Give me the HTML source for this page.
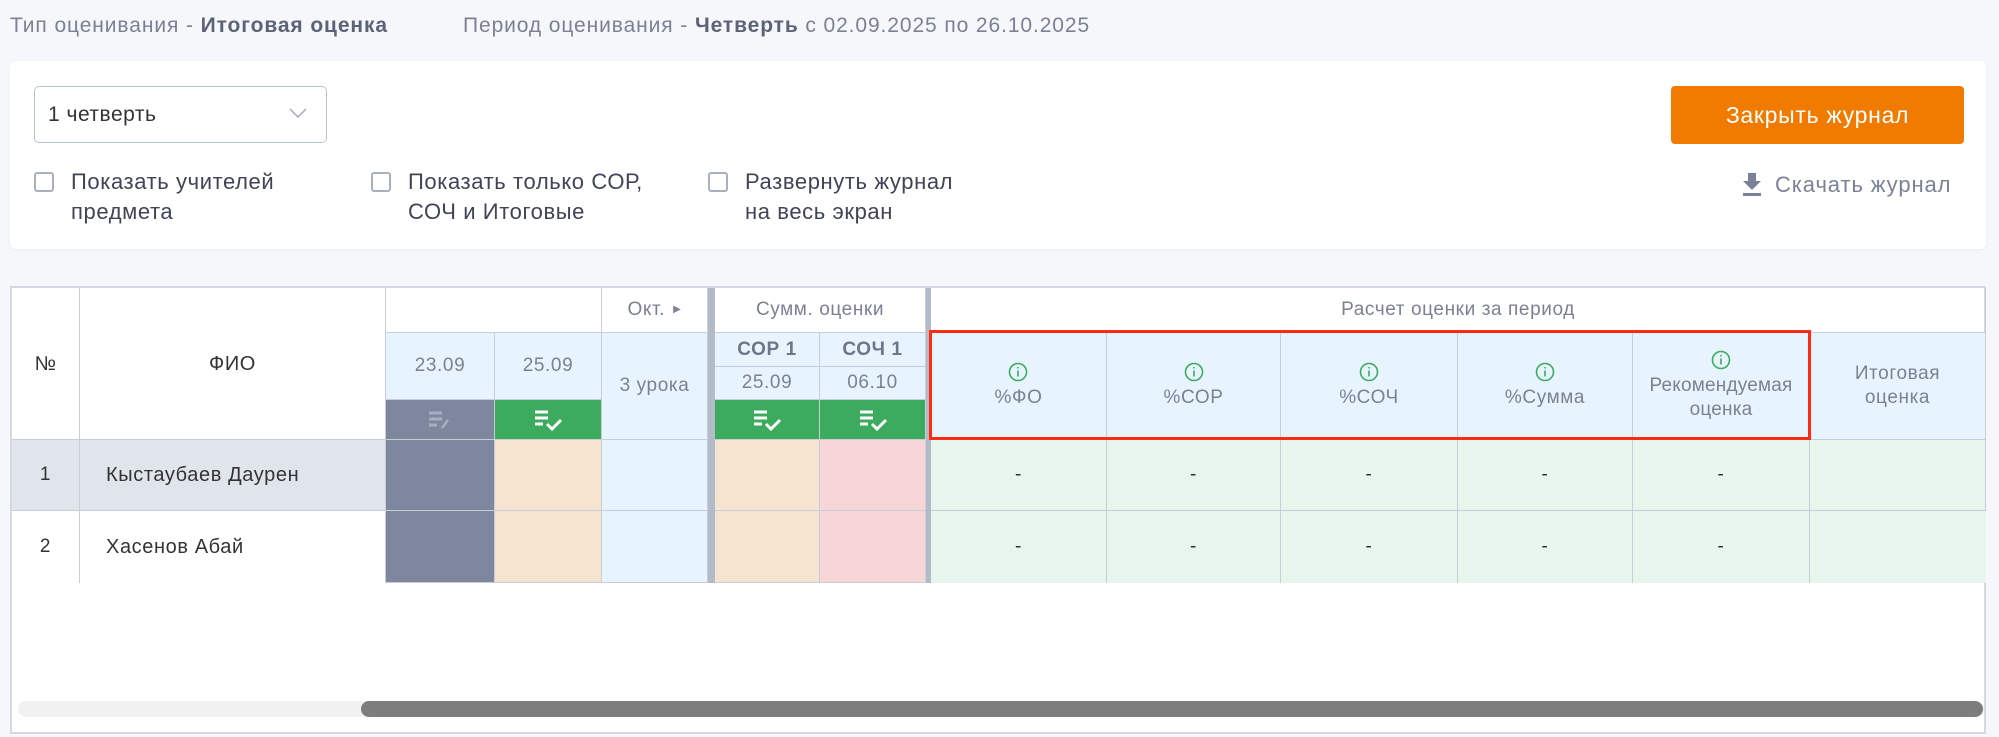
<!DOCTYPE html>
<html><head><meta charset="utf-8"><style>
*{box-sizing:border-box;margin:0;padding:0}
body{width:1999px;height:737px;background:#f5f7fa;font-family:"Liberation Sans",sans-serif;color:#3a3f4f;position:relative;overflow:hidden}
.a{position:absolute}
.t{color:#7a8194;font-size:21px;letter-spacing:0.9px}
.t b{color:#5d6377}
.c{position:absolute;display:flex;align-items:center;justify-content:center;text-align:center;color:#7a8194;font-size:19px;letter-spacing:0.6px;line-height:24px;border-right:1px solid #c8cdd8;border-bottom:1px solid #c8cdd8}
.cb{position:absolute;width:20px;height:20px;border:2px solid #a9b0bf;border-radius:3px;background:#fff}
.lbl{position:absolute;font-size:22px;letter-spacing:0.6px;line-height:30px;color:#3f4456}
.ic{display:block;margin:0 auto 4px}
</style></head><body>
<div class="a t" style="left:10px;top:14px">Тип оценивания - <b>Итоговая оценка</b></div>
<div class="a t" style="left:463px;top:14px">Период оценивания - <b>Четверть</b> с 02.09.2025 по 26.10.2025</div>

<div class="a" style="left:10px;top:61px;width:1976px;height:188px;background:#fff;border-radius:6px;box-shadow:0 1px 3px rgba(0,0,0,.05)"></div>
<div class="a" style="left:34px;top:86px;width:293px;height:57px;border:1px solid #b8c2d2;border-radius:5px;background:#fff"></div>
<div class="a" style="left:48px;top:103px;font-size:21px;letter-spacing:0.5px;color:#333">1 четверть</div>
<svg class="a" style="left:288px;top:106px" width="20" height="14"><path d="M2 3l8 8 8-8" fill="none" stroke="#a9b3c6" stroke-width="1.6"/></svg>

<div class="cb" style="left:34px;top:172px"></div>
<div class="lbl" style="left:71px;top:167px">Показать учителей<br>предмета</div>
<div class="cb" style="left:371px;top:172px"></div>
<div class="lbl" style="left:408px;top:167px">Показать только СОР,<br>СОЧ и Итоговые</div>
<div class="cb" style="left:708px;top:172px"></div>
<div class="lbl" style="left:745px;top:167px">Развернуть журнал<br>на весь экран</div>

<div class="a" style="left:1671px;top:86px;width:293px;height:58px;background:#f07b00;border-radius:4px;color:#fff;font-size:23px;letter-spacing:0.7px;display:flex;align-items:center;justify-content:center">Закрыть журнал</div>
<svg class="a" style="left:1741px;top:171px" width="22" height="26"><path d="M7 2h8v8h5l-9 9-9-9h5z" fill="#7a8198"/><rect x="2" y="22" width="18" height="3" fill="#7a8198"/></svg>
<div class="a" style="left:1775px;top:172px;font-size:22px;letter-spacing:0.9px;color:#7a8198">Скачать журнал</div>

<!-- table -->
<div class="a" style="left:10px;top:286px;width:1976px;height:448px;background:#fff;border:2px solid #d3d8e1"></div>
<div class="c" style="left:12px;top:288px;width:68px;height:152px;color:#333;font-size:20px">№</div>
<div class="c" style="left:80px;top:288px;width:306px;height:152px;color:#333;font-size:20px">ФИО</div>
<div class="c" style="left:386px;top:288px;width:216px;height:45px"></div>
<div class="c" style="left:602px;top:288px;width:106px;height:45px">Окт. <span style="font-size:10px;margin-left:8px">▶</span></div>
<div class="a" style="left:708px;top:288px;width:7px;height:295px;background:#b3bac8"></div>
<div class="c" style="left:715px;top:288px;width:211px;height:45px">Сумм. оценки</div>
<div class="a" style="left:926px;top:288px;width:5px;height:295px;background:#b3bac8"></div>
<div class="c" style="left:931px;top:288px;width:1055px;height:45px">Расчет оценки за период</div>

<div class="c" style="left:386px;top:333px;width:109px;height:67px;background:#e8f4fd">23.09</div>
<div class="c" style="left:495px;top:333px;width:107px;height:67px;background:#e8f4fd">25.09</div>
<div class="c" style="left:386px;top:400px;width:109px;height:40px;background:#7f879f"><svg width="26" height="22"><g stroke="#a8aec0" stroke-width="3"><path d="M2 4h13M2 10h13M2 16h8"/><path d="M15 19l6-8" stroke-width="2.5"/></g></svg></div>
<div class="c" style="left:495px;top:400px;width:107px;height:40px;background:#3dab5e"><svg width="30" height="24"><g stroke="#fff" stroke-width="3" fill="none"><path d="M2 4h13M2 10h13M2 16h8"/><path d="M14 16l5 5 9-9"/></g></svg></div>
<div class="c" style="left:602px;top:333px;width:106px;height:107px;background:#e8f4fd">3 урока</div>

<div class="c" style="left:715px;top:333px;width:105px;height:34px;background:#e8f4fd;font-weight:bold;color:#6f7588">СОР 1</div>
<div class="c" style="left:820px;top:333px;width:106px;height:34px;background:#e8f4fd;font-weight:bold;color:#6f7588">СОЧ 1</div>
<div class="c" style="left:715px;top:367px;width:105px;height:33px;background:#e8f4fd">25.09</div>
<div class="c" style="left:820px;top:367px;width:106px;height:33px;background:#e8f4fd">06.10</div>
<div class="c" style="left:715px;top:400px;width:105px;height:40px;background:#3dab5e"><svg width="30" height="24"><g stroke="#fff" stroke-width="3" fill="none"><path d="M2 4h13M2 10h13M2 16h8"/><path d="M14 16l5 5 9-9"/></g></svg></div>
<div class="c" style="left:820px;top:400px;width:106px;height:40px;background:#3dab5e"><svg width="30" height="24"><g stroke="#fff" stroke-width="3" fill="none"><path d="M2 4h13M2 10h13M2 16h8"/><path d="M14 16l5 5 9-9"/></g></svg></div>

<div class="c" style="left:931px;top:333px;width:176px;height:107px;background:#e8f4fd"><div><svg class="ic" width="20" height="20"><circle cx="10" cy="10" r="8.5" fill="none" stroke="#3dab5e" stroke-width="1.6"/><path d="M10 8.5v6M10 5v1.5" stroke="#3dab5e" stroke-width="1.6"/></svg>%ФО</div></div>
<div class="c" style="left:1107px;top:333px;width:174px;height:107px;background:#e8f4fd"><div><svg class="ic" width="20" height="20"><circle cx="10" cy="10" r="8.5" fill="none" stroke="#3dab5e" stroke-width="1.6"/><path d="M10 8.5v6M10 5v1.5" stroke="#3dab5e" stroke-width="1.6"/></svg>%СОР</div></div>
<div class="c" style="left:1281px;top:333px;width:177px;height:107px;background:#e8f4fd"><div><svg class="ic" width="20" height="20"><circle cx="10" cy="10" r="8.5" fill="none" stroke="#3dab5e" stroke-width="1.6"/><path d="M10 8.5v6M10 5v1.5" stroke="#3dab5e" stroke-width="1.6"/></svg>%СОЧ</div></div>
<div class="c" style="left:1458px;top:333px;width:175px;height:107px;background:#e8f4fd"><div><svg class="ic" width="20" height="20"><circle cx="10" cy="10" r="8.5" fill="none" stroke="#3dab5e" stroke-width="1.6"/><path d="M10 8.5v6M10 5v1.5" stroke="#3dab5e" stroke-width="1.6"/></svg>%Сумма</div></div>
<div class="c" style="left:1633px;top:333px;width:177px;height:107px;background:#e8f4fd;letter-spacing:0.2px"><div><svg class="ic" width="20" height="20"><circle cx="10" cy="10" r="8.5" fill="none" stroke="#3dab5e" stroke-width="1.6"/><path d="M10 8.5v6M10 5v1.5" stroke="#3dab5e" stroke-width="1.6"/></svg>Рекомендуемая<br>оценка</div></div>
<div class="c" style="left:1810px;top:333px;width:176px;height:107px;background:#e8f4fd">Итоговая<br>оценка</div>

<div class="c" style="left:12px;top:440px;width:68px;height:71px;background:#e0e5ec;color:#333">1</div>
<div class="c" style="left:80px;top:440px;width:306px;height:71px;background:#e0e5ec;color:#333;justify-content:flex-start;padding-left:26px;font-size:20px">Кыстаубаев Даурен</div>
<div class="c" style="left:12px;top:511px;width:68px;height:72px;color:#333;border-bottom:none">2</div>
<div class="c" style="left:80px;top:511px;width:306px;height:72px;color:#333;justify-content:flex-start;padding-left:26px;border-bottom:none;font-size:20px">Хасенов Абай</div>

<div class="c" style="left:386px;top:440px;width:109px;height:71px;background:#7f879f"></div>
<div class="c" style="left:386px;top:511px;width:109px;height:72px;background:#7f879f"></div>
<div class="c" style="left:495px;top:440px;width:107px;height:71px;background:#f5e4d0"></div>
<div class="c" style="left:495px;top:511px;width:107px;height:72px;background:#f5e4d0"></div>
<div class="c" style="left:602px;top:440px;width:106px;height:71px;background:#e8f4fd"></div>
<div class="c" style="left:602px;top:511px;width:106px;height:72px;background:#e8f4fd"></div>
<div class="c" style="left:715px;top:440px;width:105px;height:71px;background:#f5e4d0"></div>
<div class="c" style="left:715px;top:511px;width:105px;height:72px;background:#f5e4d0"></div>
<div class="c" style="left:820px;top:440px;width:106px;height:71px;background:#f6d6d6"></div>
<div class="c" style="left:820px;top:511px;width:106px;height:72px;background:#f6d6d6"></div>

<div class="c" style="left:931px;top:440px;width:176px;height:71px;background:#e7f5ec;color:#333">-</div>
<div class="c" style="left:1107px;top:440px;width:174px;height:71px;background:#e7f5ec;color:#333">-</div>
<div class="c" style="left:1281px;top:440px;width:177px;height:71px;background:#e7f5ec;color:#333">-</div>
<div class="c" style="left:1458px;top:440px;width:175px;height:71px;background:#e7f5ec;color:#333">-</div>
<div class="c" style="left:1633px;top:440px;width:177px;height:71px;background:#e7f5ec;color:#333">-</div>
<div class="c" style="left:1810px;top:440px;width:176px;height:71px;background:#e7f5ec"></div>
<div class="c" style="left:931px;top:511px;width:176px;height:72px;background:#e7f5ec;color:#333;border-bottom:none">-</div>
<div class="c" style="left:1107px;top:511px;width:174px;height:72px;background:#e7f5ec;color:#333;border-bottom:none">-</div>
<div class="c" style="left:1281px;top:511px;width:177px;height:72px;background:#e7f5ec;color:#333;border-bottom:none">-</div>
<div class="c" style="left:1458px;top:511px;width:175px;height:72px;background:#e7f5ec;color:#333;border-bottom:none">-</div>
<div class="c" style="left:1633px;top:511px;width:177px;height:72px;background:#e7f5ec;color:#333;border-bottom:none">-</div>
<div class="c" style="left:1810px;top:511px;width:176px;height:72px;background:#e7f5ec;border-bottom:none;border-right:none"></div>

<div class="a" style="left:929px;top:330px;width:882px;height:110px;border:3px solid #ff2a14"></div>

<div class="a" style="left:18px;top:701px;width:1966px;height:16px;background:#f1f1f1;border-radius:8px"></div>
<div class="a" style="left:361px;top:701px;width:1622px;height:16px;background:#7d7d7d;border-radius:8px"></div>
</body></html>
